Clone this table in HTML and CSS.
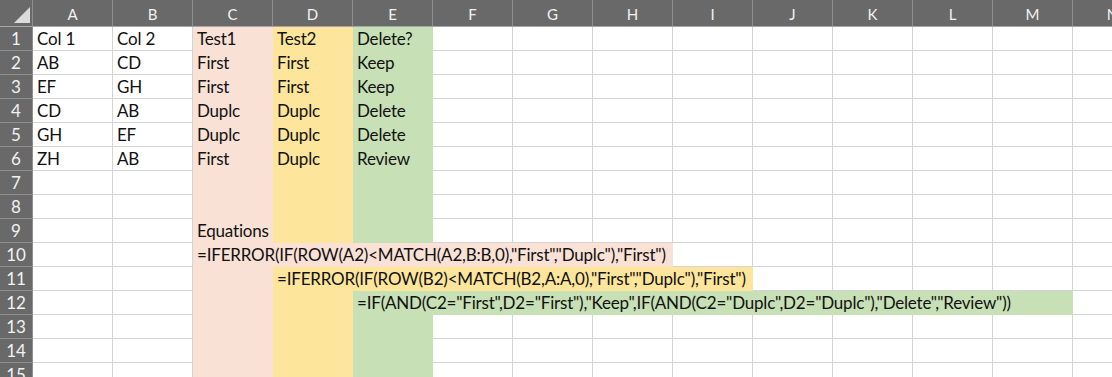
FILE: index.html
```html
<!DOCTYPE html>
<html lang="en">
<head>
  <meta charset="UTF-8">
  <title>Duplicates Check</title>
  <link rel="stylesheet" href="styles.css">
</head>
<body>
  <div class="sheet" id="sheet"></div>

  <script>
    const columns = "ABCDEFGHIJKLMN".split("");
    const rowCount = 15;

    // fill colour per column (C, D, E are shaded down the whole sheet)
    const columnFill = { C: "fill-peach", D: "fill-gold", E: "fill-green" };

    const values = {
      1: ["Col 1", "Col 2", "Test1", "Test2", "Delete?"],
      2: ["AB", "CD", "First", "First", "Keep"],
      3: ["EF", "GH", "First", "First", "Keep"],
      4: ["CD", "AB", "Duplc", "Duplc", "Delete"],
      5: ["GH", "EF", "Duplc", "Duplc", "Delete"],
      6: ["ZH", "AB", "First", "Duplc", "Review"],
      9: ["", "", "Equations"]
    };

    // formula text shown as plain strings, with the range their fill covers
    const formulas = [
      { row: 10, col: "C", span: 6, fill: "fill-peach",
        text: '=IFERROR(IF(ROW(A2)<MATCH(A2,B:B,0),"First","Duplc"),"First")' },
      { row: 11, col: "D", span: 6, fill: "fill-gold",
        text: '=IFERROR(IF(ROW(B2)<MATCH(B2,A:A,0),"First","Duplc"),"First")' },
      { row: 12, col: "E", span: 9, fill: "fill-green",
        text: '=IF(AND(C2="First",D2="First"),"Keep",IF(AND(C2="Duplc",D2="Duplc"),"Delete","Review"))' }
    ];

    const sheet = document.getElementById("sheet");

    function addCell(className, text) {
      const cell = document.createElement("div");
      cell.className = className;
      if (text) cell.textContent = text;
      sheet.appendChild(cell);
      return cell;
    }

    // header row
    const corner = addCell("corner");
    corner.innerHTML = '<svg width="33" height="27" viewBox="0 0 33 27"><polygon points="14,23 30,23 30,7" fill="#dcdcdc"/></svg>';
    for (const col of columns) {
      addCell("col-head", col);
    }

    for (let r = 1; r <= rowCount; r++) {
      addCell("row-head", String(r));
      const rowValues = values[r] || [];
      const formula = formulas.find(f => f.row === r);

      for (let c = 0; c < columns.length; c++) {
        const col = columns[c];
        if (formula && col === formula.col) {
          const cell = addCell("cell " + formula.fill, formula.text);
          cell.style.gridColumn = "span " + formula.span;
          c += formula.span - 1;
          continue;
        }
        const fill = columnFill[col] || "";
        addCell("cell " + fill, rowValues[c] || "");
      }
    }
  </script>
</body>
</html>
```

FILE: styles.css
```css
body {
  margin: 0;
  padding: 0;
  background-color: #fff;
  overflow: hidden;
  font-family: 'Lato', 'Noto Sans', sans-serif;
}

.sheet {
  display: grid;
  grid-template-columns: 33px repeat(14, 80px);
  grid-template-rows: 27px repeat(15, 24px);
  width: 1153px;
}

.corner,
.col-head,
.row-head {
  background-color: #696969;
  color: #f2f2f2;
  box-sizing: border-box;
  border-right: 1px solid #8f8f8f;
  border-bottom: 1px solid #8f8f8f;
}

.corner {
  border-bottom-color: #a6a6a6;
}

.corner svg {
  display: block;
}

.col-head {
  display: flex;
  align-items: center;
  justify-content: center;
  font-size: 15px;
  padding-top: 1px;
  border-bottom-color: #a6a6a6;
}

.row-head {
  display: flex;
  align-items: flex-end;
  justify-content: center;
  font-size: 17px;
  line-height: 20px;
  padding-bottom: 1px;
}

.cell {
  box-sizing: border-box;
  border-right: 1px solid #d4d4d4;
  border-bottom: 1px solid #d4d4d4;
  display: flex;
  align-items: flex-end;
  padding: 0 0 1px 4px;
  font-size: 17px;
  line-height: 20px;
  letter-spacing: -0.2px;
  color: #111;
  white-space: nowrap;
  overflow: visible;
}

.fill-peach {
  background-color: #f9e1d6;
  border-color: #f9e1d6;
}

.fill-gold {
  background-color: #fde59c;
  border-color: #fde59c;
}

.fill-green {
  background-color: #c7e0b5;
  border-color: #c7e0b5;
}
```
